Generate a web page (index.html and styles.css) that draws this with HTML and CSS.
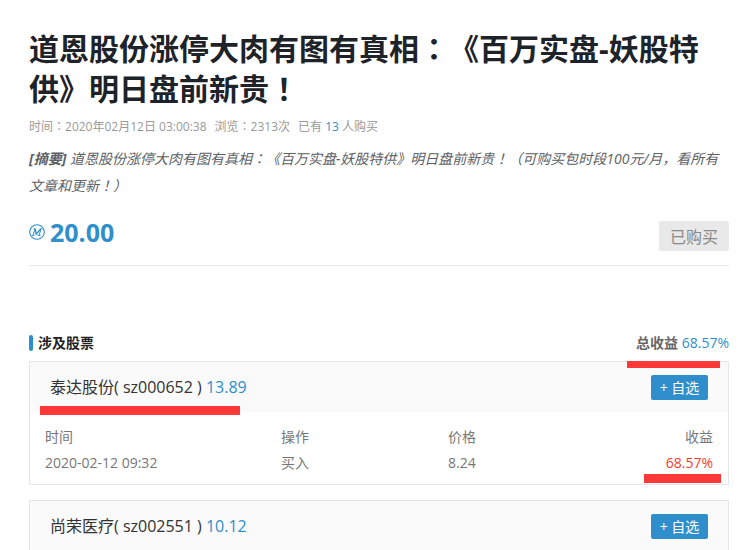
FILE: index.html
```html
<!DOCTYPE html>
<html lang="zh-CN">
<head>
<meta charset="utf-8">
<title>道恩股份涨停大肉有图有真相</title>
<link rel="stylesheet" href="styles.css">
</head>
<body>
<main class="page">
  <h1 class="title">道恩股份涨停大肉有图有真相<span class="mid" lang="zh-Hant">：</span>《百万实盘-妖股特供》明日盘前新贵<span class="mid" lang="zh-Hant">！</span></h1>
  <div class="meta">
    <span>时间<span class="mid" lang="zh-Hant">：</span>2020年02月12日 03:00:38</span>
    <span>浏览<span class="mid" lang="zh-Hant">：</span>2313次</span>
    <span>已有 <a class="count" href="#buyers">13</a> 人购买</span>
  </div>
  <p class="summary"><b>[摘要]</b> 道恩股份涨停大肉有图有真相<span class="mid" lang="zh-Hant">：</span>《百万实盘-妖股特供》明日盘前新贵<span class="mid" lang="zh-Hant">！</span>（可购买包时段100元/月，看所有文章和更新<span class="mid" lang="zh-Hant">！</span>）</p>
  <div class="purchase">
    <div class="price">
      <svg class="coin" viewBox="0 0 16 16" aria-hidden="true">
        <circle cx="8" cy="8" r="7.3" fill="none" stroke="currentColor" stroke-width="1.1"/>
        <path d="M2.8 11.3h2.6M4.1 11.2L6 4.9M4.6 4.8h1.8M8.6 11.3h3M10.2 11.2l1.8-6.4M11.4 4.8h2" fill="none" stroke="currentColor" stroke-width="1"/>
        <path d="M6.3 4.8l.9 5.4 4.5-5.4" fill="none" stroke="currentColor" stroke-width="1.3"/>
      </svg>
      <strong>20.00</strong>
    </div>
    <button class="bought" type="button" disabled>已购买</button>
  </div>

  <section>
    <header class="section-head">
      <h2>涉及股票</h2>
      <div class="total"><b>总收益</b> <span>68.57%</span></div>
    </header>

    <article class="card">
      <i class="mark mark-total"></i>
      <header class="card-head">
        <h3>泰达股份( sz000652 ) <a href="#sz000652">13.89</a></h3>
        <button class="add" type="button">+ 自选</button>
        <i class="mark mark-name"></i>
      </header>
      <div class="card-body">
        <table>
          <thead>
            <tr><th class="c-time">时间</th><th class="c-act">操作</th><th>价格</th><th class="c-gain">收益</th></tr>
          </thead>
          <tbody>
            <tr><td>2020-02-12 09:32</td><td>买入</td><td>8.24</td><td class="c-gain up">68.57%</td></tr>
          </tbody>
        </table>
      </div>
      <i class="mark mark-gain"></i>
    </article>

    <article class="card">
      <header class="card-head">
        <h3>尚荣医疗( sz002551 ) <a href="#sz002551">10.12</a></h3>
        <button class="add" type="button">+ 自选</button>
      </header>
    </article>
  </section>
</main>
</body>
</html>
```
FILE: styles.css
```css
* { box-sizing: border-box; }

html { overflow-x: hidden; scrollbar-width: none; }

body {
  margin: 0;
  background: #fff;
  color: #666;
  font: 14px/26px "Open Sans", "Noto Sans CJK SC", sans-serif;
  text-spacing-trim: space-all;
}

button { font-family: inherit; border: 0; padding: 0; }
a { color: #2e8fcc; text-decoration: none; }
h1, h2, h3, p { margin: 0; }

.page { padding: 29px 8px 0 29px; }

/* Punctuation centred in its square */
.mid { font-family: "Noto Sans CJK TC", sans-serif; line-height: 1; }

.title {
  color: #1d2328;
  font-size: 30px;
  line-height: 40px;
  font-weight: 700;
}

.meta {
  display: flex;
  gap: 8px;
  margin-top: 8px;
  color: #999;
  font-size: 12px;
  line-height: 20px;
}

.summary {
  margin-top: 8px;
  color: #5c6166;
  font-style: italic;
  line-height: 27px;
}

.purchase {
  display: flex;
  align-items: center;
  justify-content: space-between;
  height: 67px;
  border-bottom: 1px solid #e6e6e6;
}

.price {
  display: flex;
  align-items: center;
  gap: 5px;
  color: #2e8fcc;
  font-size: 25px;
}

.coin { width: 16px; height: 16px; }

.bought {
  width: 70px;
  height: 30px;
  margin-top: 8px;
  border-radius: 2px;
  background: #e9e9e9;
  color: #888;
  font-size: 16px;
}

.section-head {
  display: flex;
  align-items: center;
  justify-content: space-between;
  margin-top: 59px;
  height: 36px;
}

.section-head h2 {
  display: flex;
  align-items: center;
  gap: 5px;
  color: #222;
  font-size: 14px;
}

.section-head h2::before {
  content: "";
  width: 4px;
  height: 16px;
  border-radius: 2px;
  background: #2e8fcc;
}

.total span { color: #2e8fcc; }

.card {
  position: relative;
  margin-bottom: 15px;
  border: 1px solid #e6e6e6;
}

.card-head {
  position: relative;
  display: flex;
  align-items: center;
  justify-content: space-between;
  height: 50px;
  padding: 0 20px;
  background: #fafafa;
}

.card-head h3 {
  color: #333;
  font-size: 16px;
  font-weight: 400;
}

.add {
  width: 57px;
  height: 25px;
  border-radius: 2px;
  background: #2e8fcc;
  color: #fff;
  font-size: 14px;
}

.card-body { padding: 12px 15px 8px; }

table {
  width: 100%;
  border-collapse: collapse;
  table-layout: fixed;
  color: #777;
}

th, td {
  padding: 0;
  height: 26px;
  text-align: left;
  font-weight: 400;
}

.c-time { width: 236px; }
.c-act { width: 25%; }
th.c-gain, td.c-gain { text-align: right; }
.up { color: #f04030; }

/* Red underlines drawn over the cards */
.mark {
  position: absolute;
  z-index: 1;
  height: 9px;
  background: #fc3838;
}

.mark-total { top: -1px; right: 8px; width: 93px; height: 7px; }
.mark-name { bottom: -3px; left: 10px; width: 200px; }
.mark-gain { bottom: 1px; right: 7px; width: 77px; }
```
